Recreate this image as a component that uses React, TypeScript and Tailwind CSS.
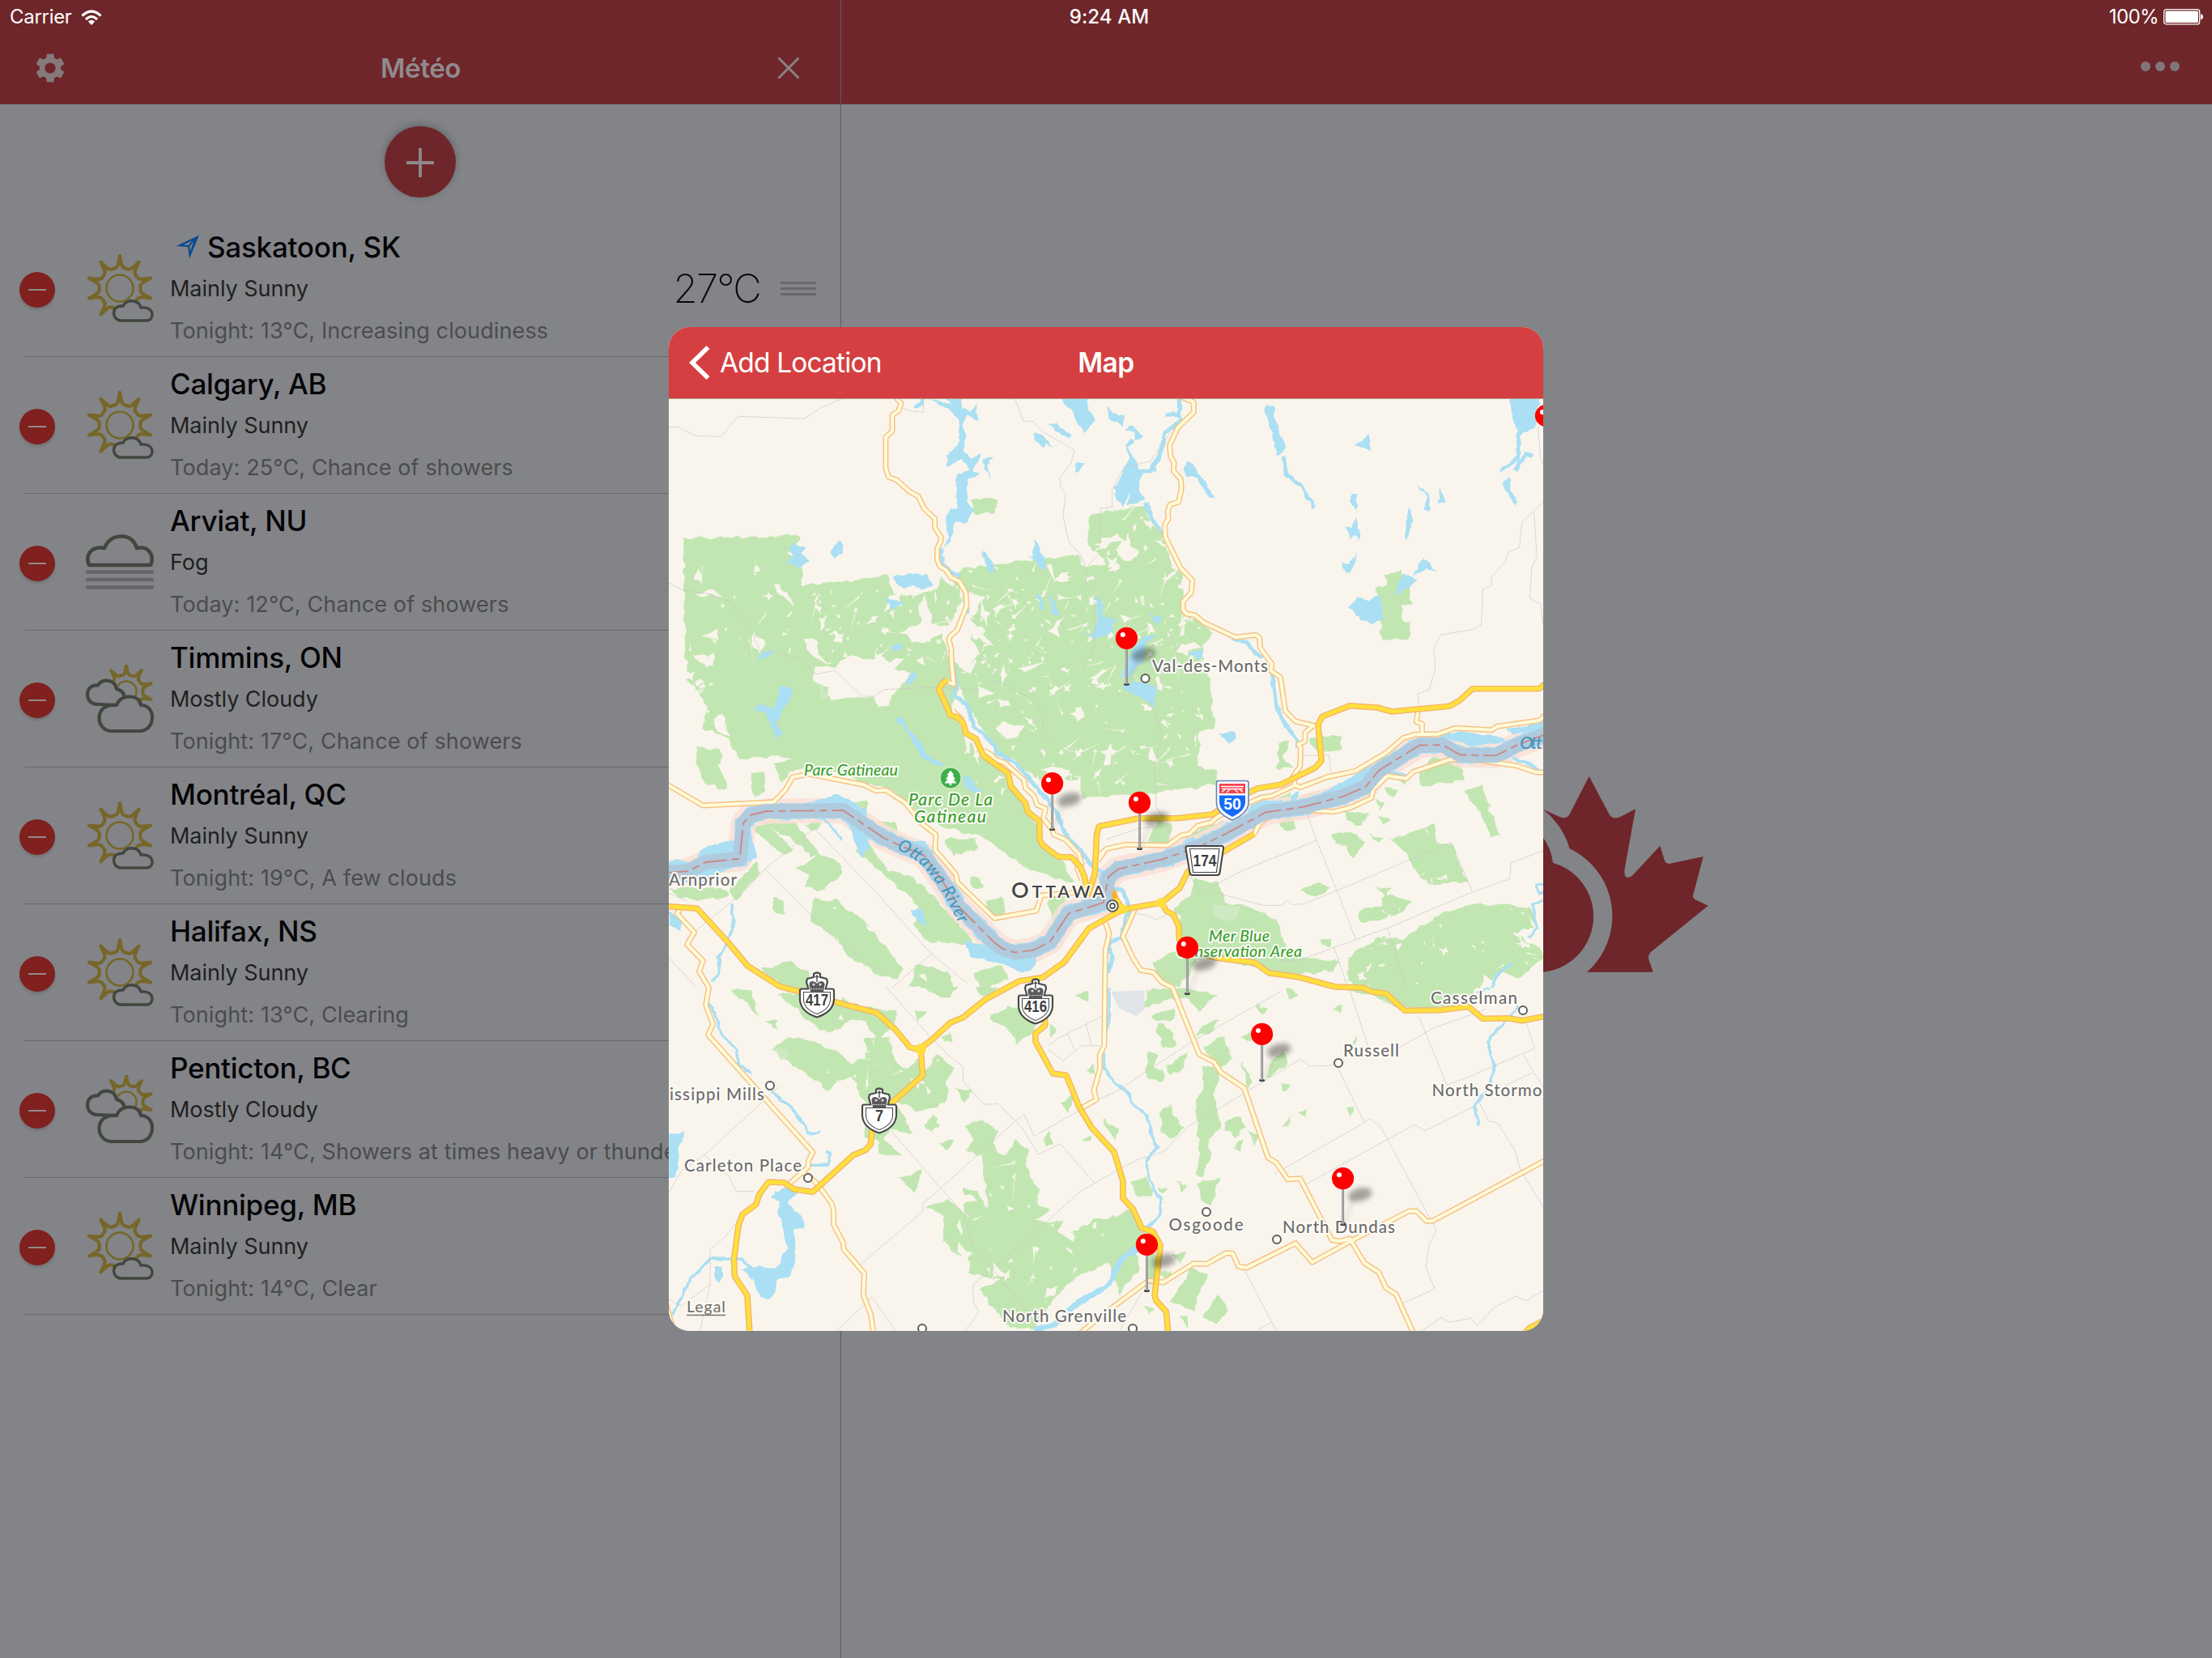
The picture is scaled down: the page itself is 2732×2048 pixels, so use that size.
import React from "react";
import { MdSettings } from "react-icons/md";

/* ------------------------------------------------------------------ */
/* Weather icons                                                        */
/* ------------------------------------------------------------------ */

const SUN = "#766629";
const CLOUD = "#42463f";
const SHADE = "#838487";

function sunPath(cx: number, cy: number, r: number, dip: number) {
  const at = (deg: number, rad: number) => {
    const a = (deg * Math.PI) / 180;
    return `${(cx + rad * Math.sin(a)).toFixed(2)} ${(cy - rad * Math.cos(a)).toFixed(2)}`;
  };
  let d = `M${at(0, r)}`;
  for (let i = 0; i < 10; i++) {
    d += `C${at(i * 36 + 6, r * 0.62)} ${at(i * 36 + 8, dip)} ${at(i * 36 + 18, dip)}`;
    d += `C${at(i * 36 + 28, dip)} ${at(i * 36 + 30, r * 0.62)} ${at(i * 36 + 36, r)}`;
  }
  return d + "Z";
}

function MainlySunny() {
  return (
    <svg viewBox="0 0 84 84" className="h-[84px] w-[84px]" fill="none" strokeLinejoin="round">
      <path d={sunPath(42, 42, 40, 25.5)} stroke={SUN} strokeWidth="4.2" />
      <circle cx="42" cy="42" r="16.5" stroke={SUN} strokeWidth="2.6" />
      <path
        d="M42.500 82 C36 81 34.500 75 34.500 72.500 C34.500 67 39 63.500 46 64 C48 59 54 57 59 58 C65 59 67 62 68 66 C77 65 82 69 82 75 C82 79 79 82 75 82 Z"
        fill={SHADE}
        stroke={CLOUD}
        strokeWidth="3.4"
      />
    </svg>
  );
}

function Fog() {
  return (
    <svg viewBox="0 0 84 84" className="h-[84px] w-[84px]" fill="none">
      <path
        d="M4 46 C-1 34 6 22 23 25 C27 15 34 10.500 44 10.500 C54 10.500 60 16 63 25 C78 22 85 34 80 46 Z"
        stroke={CLOUD}
        strokeWidth="4.600"
        strokeLinejoin="round"
      />
      {[54.5, 64, 73.5].map((y) => (
        <path key={y} d={`M2 ${y}H82`} stroke="#646567" strokeWidth="4.4" strokeLinecap="round" />
      ))}
    </svg>
  );
}

function MostlyCloudy() {
  return (
    <svg viewBox="0 0 84 84" className="h-[84px] w-[84px]" fill="none" strokeLinejoin="round">
      <path d={sunPath(50, 33, 32, 20.5)} stroke={SUN} strokeWidth="4" />
      <circle cx="50" cy="33" r="12.500" stroke={SUN} strokeWidth="2.6" />
      <path
        d="M15 49 C6 49 2 43 2 37 C2 29 8 24.500 15 25.500 C18 20 24 19 29 20 C35 21.500 37 25 38 30 C46 32 48 37 48 43 L40 50 Z"
        fill={SHADE}
        stroke={CLOUD}
        strokeWidth="4.200"
      />
      <path
        d="M31 82 C20 81 16.500 72 16.500 66 C16.500 56 24 48.500 38 50 C41 42 47 39.500 54 39.500 C62 39.500 67 44 68 50 C77 50 82 57 82 65 C82 75 76 81 68 82 Z"
        fill={SHADE}
        stroke={CLOUD}
        strokeWidth="4.200"
      />
    </svg>
  );
}

const ICONS = { sunny: MainlySunny, fog: Fog, cloudy: MostlyCloudy };

/* ------------------------------------------------------------------ */
/* Sidebar                                                              */
/* ------------------------------------------------------------------ */

type Place = {
  name: string;
  icon: keyof typeof ICONS;
  now: string;
  next: string;
  temp?: string;
  here?: boolean;
};

const PLACES: Place[] = [
  { name: "Saskatoon, SK", icon: "sunny", now: "Mainly Sunny", next: "Tonight: 13°C, Increasing cloudiness", temp: "27°C", here: true },
  { name: "Calgary, AB", icon: "sunny", now: "Mainly Sunny", next: "Today: 25°C, Chance of showers" },
  { name: "Arviat, NU", icon: "fog", now: "Fog", next: "Today: 12°C, Chance of showers" },
  { name: "Timmins, ON", icon: "cloudy", now: "Mostly Cloudy", next: "Tonight: 17°C, Chance of showers" },
  { name: "Montréal, QC", icon: "sunny", now: "Mainly Sunny", next: "Tonight: 19°C, A few clouds" },
  { name: "Halifax, NS", icon: "sunny", now: "Mainly Sunny", next: "Tonight: 13°C, Clearing" },
  { name: "Penticton, BC", icon: "cloudy", now: "Mostly Cloudy", next: "Tonight: 14°C, Showers at times heavy or thunde" },
  { name: "Winnipeg, MB", icon: "sunny", now: "Mainly Sunny", next: "Tonight: 14°C, Clear" },
];

function PlaceRow({ place }: { place: Place }) {
  const Icon = ICONS[place.icon];
  return (
    <li>
      <div className="flex h-[168px] pl-6">
        <div className="mt-16 flex h-11 w-11 shrink-0 items-center justify-center rounded-full bg-[#80201f] shadow-[0_3px_3px_rgba(0,0,0,0.12)]">
          <div className="h-[2px] w-[22px] bg-[#928a8c]" />
        </div>
        <div className="mt-[42px] ml-[38px] shrink-0">
          <Icon />
        </div>
        <div className="ml-5 flex min-w-0 flex-1 flex-col pt-[7px] whitespace-nowrap">
          <div className="flex h-[52px] items-center text-[35px] leading-[52px] font-medium tracking-[-0.250px] text-[#050507]">
            {place.here && (
              <svg viewBox="0 0 30 30" className="mr-[9px] ml-[7px] h-[30px] w-[30px]">
                <path d="M29 0.500 L17 29.500 L15 15 L0.500 14 Z M23 6 L9.500 12.500 L17 13 L18 20 Z" fill="#0b4b90" fillRule="evenodd" />
                <path d="M24 5 L15 15" stroke="#0b4b90" strokeWidth="2" />
              </svg>
            )}
            {place.name}
          </div>
          <div className="text-[27px] leading-[52px] tracking-[-0.040px] text-[#1f2022]">{place.now}</div>
          <div className="text-[27px] leading-[52px] tracking-[0.120px] text-[#4b4c4f]">{place.next}</div>
        </div>
        {place.temp && (
          <div className="flex shrink-0 items-start pr-[30px]">
            <span className="mt-[53px] text-[49px] leading-[64px] font-extralight tracking-[-1.800px] text-[#0a0a0c]">{place.temp}</span>
            <div className="mt-[76px] ml-[25px] flex w-11 flex-col gap-1">
              <div className="h-[3px] bg-[#67686b]" />
              <div className="h-[3px] bg-[#67686b]" />
              <div className="h-[3px] bg-[#67686b]" />
            </div>
          </div>
        )}
      </div>
      <div className="ml-[30px] h-px bg-[#67696c]" />
    </li>
  );
}

/* ------------------------------------------------------------------ */
/* Map                                                                  */
/* ------------------------------------------------------------------ */

/* The survey data is stored per sheet; a letter switches the sheet and
   each sheet has its own origin and a 2.8 x 3 resolution. */
const SHEETS: Record<string, [number, number]> = {
  A: [820, 400],
  B: [1360, 400],
  C: [820, 800],
  D: [1360, 800],
  E: [820, 1220],
  F: [1360, 1220],
};

function pts(data: string): [number, number][] {
  const out: [number, number][] = [];
  let o = SHEETS.A;
  let x: number | null = null;
  for (const t of data.trim().split(/\s+/)) {
    if (SHEETS[t]) o = SHEETS[t];
    else if (x === null) x = Number(t);
    else {
      out.push([o[0] + x / 2.8, o[1] + Number(t) / 3]);
      x = null;
    }
  }
  return out;
}

const line = (data: string) =>
  "M" + pts(data).map((p) => `${p[0].toFixed(1)} ${p[1].toFixed(1)}`).join("L");
const area = (list: string[]) => list.map((d) => line(d) + "Z").join("");
const lines = (list: string[]) => list.map(line).join("");

const FOREST = [
  "A 67 795 455 783 475 795 428 850 478 900 478 972 775 933 800 1000 870 1010 940 985 960 940 1000 965 1035 905 1430 857 1460 905 1535 885 1470 820 1465 770 1475 705 1550 690 B 30 690 155 677 180 740 215 780 240 870 250 900 280 940 285 1000 285 1070 350 1110 388 1147 350 1190 355 1245 D 372 90 393 300 340 310 330 440 400 450 405 505 200 535 0 550 C 1450 558 1440 480 1390 490 1400 450 1340 440 1300 500 1230 430 1140 370 1050 220 1020 140 990 240 1100 400 1190 470 1250 590 1290 650 1300 730 1380 790 1420 870 1330 850 1240 810 1180 760 1100 700 1020 680 940 650 860 590 770 520 700 500 500 430 380 400 250 410 230 340 130 300 150 220 110 150 75 110",
  "A 1055 655 1085 645 1145 648 1145 700 1075 705",
  "B 985 925 1040 912 1050 950 1068 980 1072 1042 1035 1047 1048 1105 1067 1105 1067 1163 970 1175 963 1090 948 980 993 972",
  "C 112 370 190 375 200 400 190 440 220 490 215 525 150 505 115 440",
  "C 380 430 480 405 490 440 440 460 400 500",
  "C 302 465 350 460 350 530 320 560 302 540",
  "C 330 640 450 640 480 690 545 770 510 775 440 710 400 690",
  "C 290 650 360 660 450 750 420 768 350 720",
  "C 480 660 550 640 530 680",
  "C 730 645 800 650 810 695 760 690",
  "C 640 570 700 570 700 620 650 610",
  "C 970 710 1080 705 1090 745 1000 770",
  "C 320 790 330 840 250 940 228 900",
  "C 450 820 540 770 610 800 620 840 550 900 490 890 500 840",
  "C 375 920 410 940 420 985 380 980",
  "C 515 930 590 935 690 1010 750 1090 830 1190 800 1230 720 1200 640 1150 600 1080 510 1010",
  "C 660 750 700 720 780 830 860 850 940 930 1000 1000 1080 1100 980 1095 900 1080 860 1020 880 960 790 870 720 800",
  "C 335 1190 430 1165 500 1200 540 1270 420 1270",
  "C 870 1170 980 1200 1000 1275 850 1260",
  "C 1070 1200 1170 1180 1190 1230 1100 1270",
  "C 1110 935 1170 925 1175 990 1120 990",
  "C 1060 850 1095 850 1100 890 1070 890",
  "C 1330 920 1385 900 1385 980 1345 1020",
  "C 17 890 200 890 230 910 180 935 60 930",
  "D 30 860 90 790 130 770 60 870",
  "D 162 725 190 640 240 650 240 725",
  "D 260 735 300 700 420 640 425 690 350 730",
  "D 545 620 650 530 655 575 600 600",
  "D 255 960 310 920 320 860 400 870 430 945 520 960 600 1010 640 1100 620 1140 820 1160 800 1200 600 1215 540 1180 400 1160 330 1150 310 1200 270 1260 200 1240 180 1170 270 1110 270 1000",
  "D 1000 710 1150 655 1160 720 1210 730 1240 800 1270 870 1150 880 1100 850 1060 770",
  "D 1255 535 1315 510 1380 700 1350 705 1310 610",
  "D 1095 460 1150 400 1240 430 1255 490 1110 515",
  "D 890 970 970 960 980 910 1075 940 1040 980 980 1010 900 1015",
  "D 690 900 750 872 790 890 740 920",
  "D 950 885 1000 890 990 915",
  "D 800 690 860 680 915 720 870 780 850 740 815 720",
  "D 925 695 980 710 960 725",
  "D 860 1140 960 1070 1040 1080 1180 980 1320 945 1480 960 1505 1040 1420 1060 1520 1110 1530 1150 1450 1220 1380 1200 1320 1270 1000 1275 850 1240",
  "F 850 0 1010 0 1180 0 1300 0 1260 60 1150 80 1040 75",
  "D 615 350 650 345 630 410 660 440 605 448",
  "D 720 335 830 325 830 380 750 390",
  "D 980 515 1030 525 1015 555 985 545",
  "D 950 560 985 570 960 600",
  "D 705 540 760 530 740 560 700 580",
  "D 615 655 650 600 675 670 630 675",
  "D 840 610 925 620 900 655 850 640",
  "D 960 620 1000 640 975 655",
  "D 755 1085 800 1080 790 1110 760 1110",
  "D 1025 490 1060 490 1050 510",
  "F 140 80 160 10 300 0 400 30 340 90 310 50 240 40",
  "F 170 100 255 80 250 115 200 130",
  "F 190 150 220 130 260 210 220 230",
  "F 325 180 345 140 410 118 380 170",
  "F 350 220 420 180 450 260 420 300 390 270",
  "F 350 290 390 290 410 320 390 400 415 520 370 560 378 620 350 700 325 690 340 640 335 520 330 430 355 370",
  "F 335 720 410 710 375 812 345 790",
  "F 205 460 240 425 245 470 290 520 240 565 205 540",
  "F 425 500 480 475 500 520 460 555 430 530",
  "F 510 530 545 550 530 590",
  "F 455 590 490 560 485 610",
  "F 485 270 528 350 505 375",
  "F 155 240 200 250 180 290 215 300 210 350 160 330",
  "F 225 290 300 240 290 290 240 320",
  "F 535 60 580 80 560 100",
  "F 640 0 685 30 650 45",
  "F 490 180 520 160 515 200",
  "F 590 270 630 230 640 290 570 340",
  "F 615 360 660 360 640 385",
  "F 680 460 710 450 710 480",
  "F 630 520 655 475 650 515",
  "F 845 440 880 440 860 485",
  "F 798 80 835 60 830 100",
  "F 870 200 885 185 875 215",
  "F 5 490 60 520 50 565",
  "F 105 720 160 700 180 780 120 770",
  "F 195 740 235 740 215 765",
  "F 262 715 300 735 280 755",
  "F 0 860 110 825 150 900 120 960 130 1040 60 1140 50 1080 20 1020 -60 1000 -100 900",
  "F 160 990 190 990 190 1070 160 1080",
  "F 240 990 290 980 280 1020",
  "F 200 1060 245 1050 230 1090",
  "F 305 1035 370 1070 340 1130 320 1200 240 1160 280 1100",
  "F 350 1220 405 1140 440 1190 400 1245",
  "F 270 1215 300 1220 300 1260",
  "F 145 1175 180 1190 160 1212",
  "E 235 5 300 10 335 110",
  "E 345 120 395 120 390 155",
  "E 390 20 480 20 600 60 620 40 720 80 800 80 805 120 770 170 740 200 700 130 640 120 600 160 540 160 490 110",
  "E 375 225 430 180 520 200 600 240 650 280 700 260 690 180 780 190 800 280 840 300 890 260 895 325 945 245 1000 300 975 350 985 400 950 440 870 460 840 430 800 420 840 500 860 540 780 530 760 560 825 620 750 620 740 570 690 550 700 430 650 330 600 350 570 380 500 330",
  "E 960 180 995 160 995 210",
  "E 1125 110 1190 70 1280 90 1285 160 1225 210 1180 140",
  "E 1080 0 1160 0 1110 40",
  "E 870 80 905 90 880 130",
  "E 900 510 930 475 955 510 920 535",
  "E 945 575 1000 565 985 600",
  "E 1005 370 1065 380 1040 430",
  "E 1040 510 1100 490 1155 540 1140 590 1180 620 1215 565 1260 600 1250 660 1300 760 1290 810 1330 830 1290 860 1380 870 1360 900 1410 940 1480 860 1568 850 1568 1010 1450 1060 1400 1090 1330 1190 1280 1260 1200 1265 1090 1120 1170 1080 1050 1060 1060 1020 960 940 970 840 900 820 980 780 1040 840 1030 750 1080 750 1120 820 1100 620 1040 610 1070 560",
  "E 810 700 890 680 870 765 830 720",
  "E 1365 430 1420 400 1400 465",
  "E 1315 585 1330 530 1350 580",
  "E 1440 565 1480 540 1480 560",
  "E 1455 310 1490 280 1490 325",
  "E 1330 140 1360 150 1340 185",
  "E 1420 30 1470 10 1465 50",
  "E 890 0 1010 0 990 40 950 30",
];

const CLEARINGS = [
  "A 880 1040 905 1010 930 1110 985 1120 1040 1000 1110 1010 1060 1100 1120 1130 1080 1170 1060 1150 1090 1220 1060 1260 C 1080 40 1060 100 1010 60 985 30 960 -60 A 920 1180 860 1180 820 1140 885 1110",
  "C 515 75 590 70 650 20 720 50 740 15 780 50 830 40 800 80 850 90 830 130 790 170 780 215 740 220 730 180 650 185 570 195 570 140 520 130",
  "A 490 1160 530 1180 540 1230 580 1260 C 520 40 500 10",
  "A 100 950 125 905 130 955",
  "A 110 1000 160 990 205 1012 150 1010",
  "A 300 1190 310 1140 350 1185 335 1215",
  "A 380 970 400 960 450 1040 420 1020",
  "A 125 1225 150 1240 170 1260 C 170 25 140 40",
  "C 100 30 140 30 175 65 150 70",
  "C 150 330 200 330 210 360 150 370",
  "C 170 260 200 250 230 330 180 310",
  "C 1150 300 1180 270 1240 290 1230 330 1190 340 1160 330",
  "B 50 840 95 770 100 820 130 850 110 880 60 860",
  "B 0 790 40 790 20 830 0 820",
];

const LAKES = [
  "A 1370 276 1465 276 1465 320 1493 355 1455 402 1430 370 1410 320",
  "A 910 276 960 290 1000 300 975 276 1028 276 1030 310 1060 325 1080 292 1078 325 1092 362 1045 340 1035 370 1045 420 1035 470 1060 500 1100 482 1070 540 1092 555 1055 575 1052 620 1045 660 1070 690 1045 740 1010 735 990 800 965 832 985 790 975 740 978 710 990 685 1020 680 1010 640 1010 560 1055 545 1030 500 977 530 980 490 1005 460 1020 430 1020 360 990 320",
  "A 862 300 890 290 890 276 905 276 898 305 865 312",
  "A 1105 500 1135 492 1115 530 1132 573 1105 540",
  "A 1325 370 1355 372 1410 415 1400 430",
  "A 1275 402 1300 405 1348 455 1320 440 1315 460 1280 430",
  "A 1418 550 1430 515 1460 520 1430 545",
  "A 1532 305 1568 340 1560 365 1540 350",
  "A 575 845 605 802 618 820 618 850 590 868",
  "A 417 895 445 860 430 830 450 815 490 830 475 850 510 880 465 908 440 885",
  "A 793 935 870 922 890 935 910 925 935 970 890 985 860 970 830 985 800 960",
  "A 1095 855 1110 847 1140 890 1142 922 1125 925",
  "A 1258 860 1275 865 1283 790 1300 840 1320 870 1315 915 1285 885",
  "A 765 1010 785 1020 840 1035 785 1060",
  "A 1285 1000 1300 1000 1320 1060 1300 1050",
  "A 1335 995 1370 1075 1340 1080",
  "A 1450 1135 1485 1150 1500 1100 1495 1005 1520 1040 1515 1090 1568 1090 1530 1150 1490 1168",
  "A 780 1195 820 1180 825 1205 800 1215",
  "A 325 1250 340 1215 385 1210 360 1230",
  "A 1555 610 1568 590 1568 645",
  "B 570 300 598 303 600 350 640 455 610 490 590 400 570 330",
  "B 285 530 300 508 330 540 395 645 375 645 330 570 290 565",
  "B 865 630 885 630 885 690 860 660",
  "B 845 750 870 755 880 710 895 775 890 803 875 780 860 800",
  "B 833 880 860 890 885 850 875 900 858 928 835 910",
  "B 875 445 900 435 925 410 937 472 900 455",
  "B 1090 598 1130 630 1140 690 1120 690 1125 640",
  "B 1175 610 1187 660 1163 665",
  "B 1068 675 1078 730 1062 800 1050 795 1055 750",
  "B 1080 935 1115 868 1160 920 1120 905",
  "B 1045 925 1097 945 1060 980 1020 1005 1030 955",
  "B 850 1050 885 1012 920 1025 965 1005 980 1095 935 1110 900 1095",
  "B 1412 276 1518 276 1500 385 1450 415 1425 370",
  "B 1385 590 1415 567 1415 610 1440 660 1430 672",
  "B 15 305 60 345 80 340 75 382 35 350",
  "B 80 400 110 375 145 415 120 430 115 400",
  "B 85 450 110 490 135 540 185 530 190 550 145 550 130 610 150 655 90 675 100 620 75 680 45 630 70 560 95 500",
  "B 165 1065 185 1085 215 1090 190 1120",
  "B 0 1075 15 1120 50 1120 30 1150 0 1160",
  "B 120 1185 150 1160 200 1150 160 1180 140 1260 105 1260",
  "B 300 1225 350 1205 345 1240",
  "D 75 145 120 120 190 150 180 225 155 190 80 160",
  "D 110 0 150 0 130 60 90 120 70 100",
  "D 410 325 460 310 468 335 445 355",
  "D 655 545 685 530 680 555 650 590",
  "D 500 605 540 570 630 565 560 615",
  "D 275 720 320 700 315 725",
  "D 745 550 830 500 960 420 1010 400 900 520",
  "D 1165 325 1240 310 1380 330 1410 350 1280 365",
  "D 1400 300 1535 278 1535 305 1420 325",
  "C 310 230 330 205 385 230 390 180 410 140 445 150 440 190 410 230 390 280 410 320 390 335 370 290 350 240",
  "C 805 270 820 250 835 290 890 350 910 400 970 435 950 440 890 410 860 340",
  "C 1030 475 1060 480 1080 520 1110 530 1070 540 1040 500",
  "C 830 130 870 85 875 110 850 135",
  "C 850 970 890 970 910 1030 890 1030",
  "C 17 970 60 1010 60 1050 17 1030",
  "C 515 570 600 542 700 600 710 740 680 780 650 690 620 630",
  "C 17 790 50 780 90 800 140 740 220 715 300 690 325 780 200 830 130 880 17 860",
  "C 1035 1090 1170 1110 1290 1120 1285 1180 1240 1205 1160 1170 1060 1150",
  "C 860 720 900 715 950 800 1000 900 940 860",
  "E 370 775 400 745 440 745 465 760 430 790 435 810 480 850 485 890 450 895 455 960 450 1020 435 1070 390 1080 385 1130 365 1155 335 1150 310 1090 270 1040 320 1035 385 1040 430 960 415 925 415 890 395 840 400 795",
  "E 17 545 70 535 65 570 45 600 55 640 40 700 17 705",
  "E 175 1035 200 1030 205 1070 190 1095 175 1075",
];

const STREAMS = [
  "A 960 835 965 890 1020 940",
  "A 1045 1050 1050 1075",
  "C 1000 60 1015 140 1000 180 1050 210 1070 290 1145 360 1150 390 1220 430 1290 520 1360 610 1385 690 1440 750 1480 810 1520 830",
  "B 630 490 640 560 690 600 740 680",
  "B 1445 400 1440 500 1380 545",
  "B 1430 545 1470 480 1495 490",
  "B 270 276 270 340 220 335",
  "B 280 350 220 405 205 490 170 540",
  "B 110 430 90 460",
  "B 155 660 180 730 215 775",
  "B 450 1165 500 1180 540 1225 560 1240",
  "D 590 90 605 220 640 290 675 340 680 370",
  "D 40 890 80 905 95 960 85 1000 70 1080 30 1090 40 1160 20 1200",
  "D 1420 410 1480 430 1515 455",
  "D 990 460 1060 475",
];

const BROOKS = [
  "C 235 945 240 1040 190 1150 195 1190 165 1240",
  "C 530 620 570 650 615 710",
  "E 160 60 200 170 250 230 260 290 300 315",
  "E 370 385 450 450 500 540 540 535",
  "E 500 655 570 655 575 615 560 605",
  "E 30 1210 60 1150 90 1080 160 1005 270 1005 300 1040",
  "E 1540 0 1540 100 1520 200 1520 290 F 45 350 80 375 120 445 160 475 175 550 195 590 155 640 165 710 205 780 205 840 165 885",
  "D 1535 875 1508 880 1510 905 1535 905",
  "D 1530 940 1495 950 1495 1010 1510 1040 1480 1075",
  "D 1420 1170 1370 1210 1350 1260",
  "F 1345 0 1300 20",
  "F 1440 70 1400 130 1370 155 1335 200 1360 290 1340 370 1290 440 1305 515",
];

const RIDEAU = "E 1280 1270 1350 1250 1430 1170 1540 1100 F 60 1020 130 960";

const BOUNDS = [
  "A 17 383 45 382 110 415 198 418 255 343 400 348 485 352 545 310 615 278",
  "A 820 310 850 322 897 327 897 280",
  "A 1215 280 1243 360 1278 362 1310 400 1420 468 1408 515 1370 570 1372 605 1390 632 1380 710 1400 808 1440 855 1460 905 1505 850 1510 685 1550 678 B 38 680 38 615 80 530 170 510 240 400",
  "A 17 960 70 990 160 1000 230 1030 290 1110 335 1215 C 400 20 490 50 515 100 590 85 685 180 730 180 760 155 900 148 1000 150 1090 155 1120 125 1170 130 1210 160 1280 190 1310 250 1312 300 1335 350",
  "A 1460 905 1460 960 1490 1000 1490 1200 C 1450 80",
  "B 1535 655 1455 735 1447 827 1405 850 1400 880 1350 937 1350 970 1320 985 1315 1112 1290 1132 1175 1152 1150 1207 1155 1260 D 1155 80 1135 155 1095 170 1100 215",
  "B 1497 695 1507 865 1490 900 1482 1015 1520 1040 1528 1115",
  "B 1510 380 1520 500 1530 520",
  "D 170 200 210 320 185 440 190 590 230 650 240 710",
  "D 700 400 788 398 795 465",
  "D 310 850 340 910 490 825 745 715",
  "D 710 610 745 715 815 900 880 1080",
  "D 385 905 560 955 620 955 645 938 660 952 700 950 815 900 1210 722 1285 905",
  "D 620 1160 680 1160 1000 1035 1285 905 1412 857 1418 797 1535 750",
  "D 805 1110 850 1250",
  "D 990 1040 1055 1260",
  "D 20 710 130 670 230 660",
  "D 110 985 150 990 190 1008 225 990",
  "C 17 910 80 940",
  "C 75 1080 270 910 350 820 520 670",
  "C 350 820 600 1090 780 1220",
  "C 520 670 720 890 920 1130 1050 1245",
  "C 790 1260 930 1130",
  "C 17 1150 110 1255",
  "E 17 760 60 680 140 620 400 365",
  "E 140 620 225 700 250 755 310 755",
  "E 245 878 210 925 160 970 160 1100 125 1270",
  "E 17 1155 60 1180 160 1100",
  "E 770 0 920 180 975 240 1035 295 1035 345 1105 433 1155 430 1240 520 1295 618 1370 578 1490 725 F 0 710 120 640 220 605 300 515 450 420 690 265 720 290 780 290 820 280",
  "E 1490 725 1440 755 1250 940 1070 1100 1070 1165 1090 1200 1040 1275",
  "E 785 530 955 740 1035 835 1070 960 1150 1060 1250 1190",
  "E 680 1025 895 830 895 800 960 740 1215 495 1245 468 1280 550 1430 460 F 0 410 60 380 170 300 330 190 620 15",
  "E 600 1270 720 1147 800 1270",
  "E 1330 215 1360 190 1515 105",
  "E 1330 230 1380 270 1445 215 1510 215",
  "E 1395 170 1420 230",
  "E 1460 135 1480 215",
  "F 860 10 930 240",
  "F 1000 240 1150 150 1330 80",
  "F 1100 110 1195 360 1250 340 1500 225 1470 130",
  "F 1460 250 1530 370",
  "F 1310 410 1490 315",
  "F 820 300 910 500 930 487 965 512 990 562 1160 900 1135 950 1123 1035 1153 1115 1045 1170",
  "F 600 690 910 500",
  "F 710 728 990 562 1085 508 1120 530 1290 440",
  "F 1310 430 1340 495 1370 500 1430 600 1450 675 1530 815",
  "F 495 1045 605 1270",
  "F 540 1270 590 1240",
  "F 140 1130 65 1270",
  "F 1110 1270 1178 1222 1205 1240 1280 1225 1300 1252 1360 1185 1435 1143 1468 1160 1530 1122",
];

const MINOR_ROADS = [
  "A 800 270 820 295 812 322 790 338 790 398 767 420 767 535 777 567 806 580 850 622 880 640 900 685 937 722 937 755 958 790 958 805 945 832 945 875 955 900 975 912 993 940 1022 955 1044 997 1047 1045 1015 1133 990 1158 985 1170 993 1200 995 1260 C 1002 135 980 128",
  "C 1105 380 1130 395 1145 412 1180 428 1245 490 1250 520 1280 550 1290 582 1320 597 1312 632 1343 675 1348 692 1390 712 1435 765 1445 800 1430 820 1445 860",
  "C 1000 235 1035 270",
  "C 0 500 135 585 380 572 420 527 445 480 500 468 690 508 732 530 768 528 835 575 890 650 940 692 938 750 1010 840 1015 870 1143 1003 1288 975 1305 918 1460 905",
  "C 1500 775 D 20 745 85 730 230 733 275 697 305 690 335 660 380 648 405 625 555 555 590 550 670 510 690 517 780 480 880 457 985 390 1045 335 1085 322 1165 320 1225 298 1350 305 1370 292 1515 270 1535 250",
  "C 1500 790 D 10 757",
  "B 280 272 320 290 320 328 265 385 237 450 240 490 252 515 250 545 275 575 278 610 268 660 238 670 230 697 233 722 220 745 222 790 275 905 315 950 312 995 283 1030 283 1060 295 1075 325 1080 355 1107 465 1162 535 1153 548 1165 550 1200 590 1260 D 587 85 620 110 637 235 672 273 740 290",
  "D 730 292 705 315 705 348 682 358 690 370 688 440 665 475 670 510",
  "D 1095 237 1090 275 1110 282 1110 318",
  "D 530 690 545 655 585 620 700 600 805 608 865 592 935 557 940 525 990 475 1055 485 1080 460 1205 415 1275 412 1435 437 1505 462 1540 462",
  "C 60 965 45 985 105 1055 80 1100 135 1160 122 1200 155 1260 E 145 65 170 135 153 175 515 610 500 640 498 665 435 725",
  "E 480 685 510 705 540 740 580 800 587 825 587 878 620 945 622 970 693 1058 690 1140 715 1210 725 1280",
  "C 1527 1020 1540 1060 1527 1120 1525 1260 E 1523 215 1507 250 1508 300 1487 380 1495 415 1435 452",
  "D 120 960 75 1070 110 1150 137 1195 180 1203 210 1240 247 1260 F 340 248 390 275 415 315 495 372 577 630 605 648 645 710 688 707 798 935 825 940 860 930 910 1020 960 1055 985 1112 1020 1137 1080 1280",
  "F 1540 638 1145 865 1125 865 1090 828 1065 828 870 935 730 1018 672 947 503 1038 475 1033 455 985 432 983 365 1024 320 1022 215 1092 165 1085 20 1200 E 1440 1280",
  "E 5 1160 35 1280",
];

const HIGHWAYS = [
  "C 980 120 965 130 950 155 975 210 990 250 1015 258 1035 280 1045 318 1078 337 1105 400 1190 465 1200 515 1250 575 1258 608 1298 642 1300 712 1310 732 1363 775 1410 777 1440 812 1455 850 1465 920",
  "C 1465 920 1490 840 1497 690 1505 662 D 130 632 260 632 385 618 450 570 540 522 620 508 740 445 762 420 750 285 765 255 860 215 955 222 1005 237 1205 217 1240 195 1285 152 1515 152 1540 130",
  "D 530 690 425 755 340 810 300 830 272 890 210 945 75 970 0 1015 C 1470 1040 1385 1165 1310 1222 1230 1235 1190 1258 E 1110 45 1035 110 990 130 930 190 888 225 895 325 790 425 720 530 715 580 697 602 655 620 515 757 450 747 415 722 362 720 330 765 318 803 272 840 258 880 242 1010 245 1070 288 1140 297 1285",
  "C 0 957 115 967 220 1090 290 1180 400 1255 E 470 15 590 52 735 93 800 155 850 220 888 232",
  "D 210 945 225 975 250 990 268 1030 270 1080 300 1120 400 1150 530 1167 580 1205 680 1220 810 1257 905 1260 F 935 15 985 22 1050 85 1175 83 1270 70 1320 115 1410 113 1455 122 1540 105",
  "C 1285 1225 E 1318 100 1318 140 1285 170 1285 200 1345 318 1392 325 1435 440 1480 520 F 45 610 75 715 75 780 110 820 140 890 180 905 205 955 185 1140 190 1160 225 1200 232 1285",
  "D 75 970 50 930 40 903 15 903",
  "F 1465 1280 1480 1262 1540 1228",
];

const RIVER =
  "C 0 835 85 828 145 795 262 782 275 650 300 620 355 606 620 603 760 705 820 735 900 770 960 860 1020 960 1140 1090 1170 1115 1215 1130 1280 1120 1335 1090 1400 985 1520 945 D 25 850 60 820 210 785 345 735 430 690 570 610 700 590 835 552 915 515 960 455 1100 362 1180 360 1240 397 1365 400 1440 360 1540 320";

/* Small clearings scattered through the woods, from a fixed seed. */
function scatter() {
  let s = 20177;
  const rnd = () => {
    s = (s * 1103515245 + 12345) % 2147483648;
    return s / 2147483648;
  };
  const zones: [number, number, number, number, number][] = [
    [1020, 725, 300, 100, 75],
    [850, 700, 170, 110, 24],
    [1190, 700, 170, 280, 110],
    [1360, 630, 125, 340, 130],
    [1000, 810, 110, 50, 16],
    [850, 830, 30, 120, 14],
    [1010, 1240, 150, 170, 30],
    [1170, 1430, 200, 210, 48],
    [1670, 1120, 230, 100, 34],
    [1730, 1010, 90, 80, 10],
    [1000, 1100, 220, 120, 16],
  ];
  let d = "";
  for (const [x0, y0, w, h, n] of zones) {
    for (let i = 0; i < n; i++) {
      const cx = x0 + rnd() * w;
      const cy = y0 + rnd() * h;
      const size = 2 + rnd() * rnd() * rnd() * 17;
      const turn = rnd() * 6.28;
      const flat = 0.25 + rnd() * 0.6;
      const k = 6 + Math.floor(rnd() * 4);
      for (let j = 0; j < k; j++) {
        const a = (j / k) * 6.283;
        const r = size * (j % 2 ? 0.35 + rnd() * 0.35 : 0.7 + rnd() * 0.9);
        const px = Math.cos(a) * r;
        const py = Math.sin(a) * r * flat;
        const x = cx + px * Math.cos(turn) - py * Math.sin(turn);
        const y = cy + px * Math.sin(turn) + py * Math.cos(turn);
        d += `${j ? "L" : "M"}${x.toFixed(1)} ${y.toFixed(1)}`;
      }
      d += "Z";
      if (i % 3 === 0) {
        const len = 10 + rnd() * 22;
        const ex = cx + Math.cos(turn) * len;
        const ey = cy + Math.sin(turn) * len;
        d += `M${cx.toFixed(1)} ${cy.toFixed(1)}L${ex.toFixed(1)} ${ey.toFixed(1)}L${(cx + 1.2).toFixed(1)} ${(cy + 1.4).toFixed(1)}Z`;
      }
    }
  }
  return d;
}

type Label = { t: string; x: number; y: number; w?: number; green?: boolean; size?: number };

const LABELS: Label[] = [
  { t: "Val-des-Monts", x: 1423, y: 830, w: 143 },
  { t: "Arnprior", x: 826, y: 1094, w: 84 },
  { t: "Parc Gatineau", x: 993, y: 958, w: 116, green: true, size: 19.5 },
  { t: "Parc De La", x: 1122, y: 995, w: 104, green: true, size: 21 },
  { t: "Gatineau", x: 1129, y: 1016, w: 89, green: true, size: 21 },
  { t: "Mer Blue", x: 1493, y: 1162.5, w: 75, green: true, size: 19.5 },
  { t: "Conservation Area", x: 1453, y: 1181.5, w: 155, green: true, size: 19.5 },
  { t: "issippi Mills", x: 827, y: 1358.5, w: 117 },
  { t: "Carleton Place", x: 845, y: 1447, w: 145 },
  { t: "North Grenville", x: 1238, y: 1632.5, w: 153 },
  { t: "Casselman", x: 1767, y: 1240, w: 107 },
  { t: "Russell", x: 1659, y: 1305, w: 69 },
  { t: "North Stormo", x: 1768.5, y: 1354, w: 136 },
  { t: "Osgoode", x: 1443.500, y: 1520, w: 92 },
  { t: "North Dundas", x: 1584, y: 1522.500, w: 139 },
];

const TOWNS = [
  [1414.6, 838], [951, 1341], [998, 1455], [1139, 1641], [1399, 1641],
  [1490, 1497], [1577, 1531], [1653, 1313], [1881, 1248],
];

const PINS = [
  [1909.500, 513.5], [1391.4, 788.3], [1299.6, 967.6], [1407.500, 991.4],
  [1466.400, 1170.4], [1558.600, 1277.4], [1658.600, 1455.600], [1416.400, 1537.4],
];

function CrownShield({ x, y, n }: { x: number; y: number; n: string }) {
  return (
    <g transform={`translate(${x} ${y})`}>
      <path
        d="M-4 -34 Q0 -37 4 -34 L4 -30 L12 -28 L13 -24 L10.500 -15.500 L19 -15.500 Q21 -15.500 21 -13 L21 -2 Q20 13 0 19.500 Q-20 13 -21 -2 L-21 -13 Q-21 -15.500 -19 -15.500 L-10.500 -15.500 L-13 -24 L-12 -28 L-4 -30 Z"
        fill="#fff"
        stroke="#4a4a4a"
        strokeWidth="2.200"
        strokeLinejoin="round"
      />
      <path d="M-16.500 -11.500 H16.500 V-1 Q15 10 0 15.500 Q-15 10 -16.500 -1 Z" fill="none" stroke="#4a4a4a" strokeWidth="1.100" />
      <path d="M-8 -12 L-9 -18 Q-11 -24 -6 -25 Q-2 -25 0 -22 Q2 -25 6 -25 Q11 -24 9 -18 L8 -12 Z" fill="#5a5a5a" />
      <path d="M0 -33 V-24 M-2.500 -30.500 H2.500" stroke="#4a4a4a" strokeWidth="1.400" />
      <path d="M-8 -15.500 H8" stroke="#d8d8d8" strokeWidth="1.200" strokeDasharray="2 1.200" />
      <circle cx="-4" cy="-21" r="1.600" fill="#ddd" />
      <circle cx="4" cy="-21" r="1.600" fill="#ddd" />
      <text y="5" textAnchor="middle" fontSize="20.500" fontWeight="700" fill="#3d3d3d" fontFamily="'Liberation Sans', sans-serif" textLength={n.length > 1 ? 28 : 10} lengthAdjust="spacingAndGlyphs">
        {n}
      </text>
    </g>
  );
}

function Pin({ x, y }: { x: number; y: number }) {
  return (
    <g transform={`translate(${x} ${y})`}>
      <ellipse cx="21" cy="20" rx="15" ry="8" transform="rotate(-14 21 20)" fill="#000" opacity="0.34" filter="url(#soft)" />
      <path d="M1 56 L14 25" stroke="#000" strokeWidth="2.500" opacity="0.14" filter="url(#soft)" />
      <ellipse cx="0" cy="57" rx="3.500" ry="1.600" fill="#3b3b3b" />
      <path d="M0 10 V57" stroke="#8c8c90" strokeWidth="3" />
      <path d="M-0.300 10 V56" stroke="#b9b9bd" strokeWidth="1.200" />
      <circle r="13.600" fill="#fe0000" />
      <circle cx="-4.600" cy="-4.400" r="3" fill="#fff" />
    </g>
  );
}

function RegionMap() {
  return (
    <svg viewBox="826 493 1080 1151" className="block h-[1151px] w-[1080px]" fill="none">
      <defs>
        <filter id="rough" x="0" y="0" width="100%" height="100%">
          <feTurbulence type="fractalNoise" baseFrequency="0.07" numOctaves="2" seed="7" />
          <feDisplacementMap in="SourceGraphic" scale="9" xChannelSelector="R" yChannelSelector="G" />
        </filter>
        <filter id="ripple" x="-2%" y="-2%" width="104%" height="104%">
          <feTurbulence type="fractalNoise" baseFrequency="0.09" numOctaves="2" seed="3" />
          <feDisplacementMap in="SourceGraphic" scale="6" xChannelSelector="R" yChannelSelector="G" />
        </filter>
        <filter id="soft" x="-60%" y="-60%" width="220%" height="220%">
          <feGaussianBlur stdDeviation="3.200" />
        </filter>
        <path id="river-label" d="M1107 1049 C1134 1060 1149 1079 1162 1099 C1172 1114 1173 1122 1190 1150" />
      </defs>
      <rect x="826" y="492" width="1080" height="1152" fill="#f9f5ed" />

      <g filter="url(#rough)">
        <path d={area(FOREST)} fill="#c2e6b1" />
        <path d={area(CLEARINGS)} fill="#f9f5ed" />
      </g>
      <path d={scatter()} fill="#f9f5ed" />
      <path d={area(["D 385 955 480 960 470 1000 430 1015 390 990", "C 540 130 570 190 540 190", "E 380 220 420 230 440 245 405 270"])} fill="#cfe9c4" />
      <path d={area(["F 35 15 150 10 150 80 120 105 60 75"])} fill="#e0e4e9" />

      <path d={line(RIVER)} stroke="#fbdfd6" strokeOpacity="0.85" strokeWidth="31" strokeLinejoin="round" />
      <g filter="url(#ripple)">
        <path d={area(LAKES)} fill="#abdff3" />
        <path d={lines(STREAMS)} stroke="#abdff3" strokeWidth="5" />
        <path d={lines(BROOKS)} stroke="#abdff3" strokeWidth="3.400" />
        <path d={line(RIDEAU)} stroke="#abdff3" strokeWidth="7" />
        <path d={line(RIVER)} stroke="#abdff3" strokeWidth="20" />
      </g>

      <path d={lines(BOUNDS)} stroke="#cbc9c6" strokeWidth="1" strokeDasharray="2 1" />
      <g strokeLinejoin="round">
        <path d={lines(MINOR_ROADS)} stroke="#f6c186" strokeWidth="7" />
        <path d={lines(MINOR_ROADS)} stroke="#fffbd8" strokeWidth="4" />
        <path d={lines(HIGHWAYS)} stroke="#f4b26a" strokeWidth="7.600" />
        <path d={lines(HIGHWAYS)} stroke="#ffdf3e" strokeWidth="5" />
        <path d={line("D 50 930 40 903 15 903")} stroke="#ffae2b" strokeWidth="5" />
      </g>
      <g fill="#ffdf3e">
        <circle cx="1434" cy="1115" r="6" />
        <circle cx="1387" cy="1123" r="6" />
        <circle cx="1137" cy="1296" r="7" />
      </g>

      <g strokeLinejoin="round">
        <path d={line(RIVER)} stroke="#b0c8dc" strokeWidth="18" strokeOpacity="0.95" />
        <path d={line(RIVER)} stroke="#cc8781" strokeWidth="1.800" strokeDasharray="30 6 9 6" />
      </g>

      <g fontFamily="Lato, sans-serif" fontSize="20.500" fontWeight="500" stroke="#fdfbf6" strokeWidth="4" strokeLinejoin="round" paintOrder="stroke">
        {LABELS.map((l) => (
          <text
            key={l.t}
            x={l.x}
            y={l.y}
            fontSize={l.size ?? 20.5}
            fontStyle={l.green ? "italic" : "normal"}
            fill={l.green ? "#37a02c" : "#6c6c6c"}
            textLength={l.w}
            style={{ paintOrder: "stroke" }}
          >
            {l.t}
          </text>
        ))}
        <text x="1249" y="1109" fill="#454545" fontWeight="600" textLength="115" style={{ paintOrder: "stroke" }}>
          <tspan fontSize="27">O</tspan>
          <tspan fontSize="21.500">TTAWA</tspan>
        </text>
        <text fill="#4597bb" fontSize="21" stroke="none" fontStyle="italic">
          <textPath href="#river-label" textLength="124">Ottawa River</textPath>
        </text>
        <text x="1877" y="925" fill="#4597bb" fontSize="22" stroke="none" fontStyle="italic" textLength="28">Ott</text>
        <text x="848" y="1621" fontSize="19.500" fill="#77746f" textLength="48" style={{ paintOrder: "stroke" }}>Legal</text>
      </g>
      <path d="M848 1624.500H896" stroke="#77746f" strokeWidth="1.600" />

      {TOWNS.map(([x, y]) => (
        <circle key={`${x}-${y}`} cx={x} cy={y} r="5" fill="#fff" stroke="#5f5f5a" strokeWidth="2" />
      ))}
      <circle cx="1374" cy="1119" r="6.800" fill="#fff" stroke="#555" strokeWidth="1.800" />
      <circle cx="1374" cy="1119" r="3" fill="#fff" stroke="#555" strokeWidth="1.800" />

      <circle cx="1174" cy="961" r="13" fill="#3db04a" stroke="#e6f4df" strokeWidth="1" />
      <path d="M1174 951.500 L1178.500 957.500 H1176.500 L1180 962.500 H1177.500 L1181.500 967.500 H1175.200 V970 H1172.800 V967.500 H1166.500 L1170.500 962.500 H1168 L1171.500 957.500 H1169.500 Z" fill="#fff" />

      <CrownShield x={1009} y={1237} n="417" />
      <CrownShield x={1279} y={1245} n="416" />
      <CrownShield x={1086} y={1380} n="7" />

      <path d="M1505 964.500 H1539.500 Q1542 964.500 1542 967 V992 Q1541 1005 1522 1013 Q1503 1005 1502.500 992 V967 Q1502.500 964.500 1505 964.500 Z" fill="#fff" stroke="#6384b8" strokeWidth="1.600" />
      <path d="M1506 968 H1538 V980 H1506 Z" fill="#f8414d" />
      <path d="M1506 982.500 H1538 V992 Q1537 1002 1522 1009 Q1507 1002 1506 992 Z" fill="#146bfa" />
      <path d="M1508 971.500 H1536 M1509 974.500 H1535 M1513 975 L1509 978.500 M1531 975 L1535 978.500 M1519 975 L1515 979 M1525 975 L1529 979" stroke="#fff" strokeWidth="1.300" />
      <text x="1522" y="1000" textAnchor="middle" fontSize="19.500" fontWeight="700" fill="#fff" fontFamily="'Liberation Sans', sans-serif">50</text>

      <path d="M1467 1045 H1508.500 Q1511.500 1045 1511 1048 L1506.500 1078 Q1506 1081 1503 1081 H1473 Q1470 1081 1469.500 1078 L1464.500 1048 Q1464 1045 1467 1045 Z" fill="#fff" stroke="#444" strokeWidth="2" />
      <path d="M1469.500 1048.500 H1506 L1502.500 1077.500 H1473.500 Z" fill="none" stroke="#444" strokeWidth="1.200" strokeLinejoin="round" />
      <text x="1488" y="1070" textAnchor="middle" fontSize="20" fontWeight="700" fill="#3d3d3d" fontFamily="'Liberation Sans', sans-serif" textLength="29" lengthAdjust="spacingAndGlyphs">174</text>

      {PINS.map(([x, y]) => (
        <Pin key={`${x}`} x={x} y={y} />
      ))}
    </svg>
  );
}

function MapSheet() {
  return (
    <section className="flex h-[1240px] w-[1080px] flex-col overflow-hidden rounded-[26px] bg-[#f9f5ed]">
      <header className="grid h-[89px] grid-cols-3 items-center border-b border-[#b5a08f] bg-[#d53f41] text-[34px] text-white">
        <button className="flex items-center pl-6 whitespace-nowrap">
          <svg viewBox="0 0 28 44" className="h-11 w-7" fill="none" stroke="#fff" strokeWidth="5.500">
            <path d="M24.500 3 L5 22 L24.500 41" />
          </svg>
          <span className="ml-[11px] text-[33.500px] tracking-[-0.850px]">Add Location</span>
        </button>
        <h2 className="text-center text-[33.500px] font-semibold tracking-[-0.500px]">Map</h2>
      </header>
      <RegionMap />
    </section>
  );
}

/* ------------------------------------------------------------------ */
/* Page                                                                 */
/* ------------------------------------------------------------------ */

function StatusBar() {
  return (
    <div className="absolute inset-x-0 top-0 grid h-[42px] grid-cols-3 items-center text-[24px] leading-[42px] text-white">
      <div className="flex items-center pl-3">
        <span className="tracking-[-0.300px]">Carrier</span>
        <svg viewBox="0 0 26 19" className="ml-[11px] h-[19px] w-[26px]" fill="none" stroke="#fff" strokeWidth="3.200">
          <path d="M1.500 7.500 Q13 -3.500 24.500 7.500" />
          <path d="M6 12 Q13 5 20 12" />
          <path d="M13 19 L8.800 14.600 Q13 11 17.200 14.600 Z" fill="#fff" stroke="none" />
        </svg>
      </div>
      <div className="pl-2 text-center font-medium tracking-[0.100px]">9:24 AM</div>
      <div className="flex items-center justify-end pr-[10px]">
        <span className="tracking-[-0.600px]">100%</span>
        <svg viewBox="0 0 50 20" className="ml-[6px] h-5 w-[50px]">
          <rect x="0.700" y="0.700" width="44" height="18.200" rx="3" fill="none" stroke="#fff" strokeWidth="1.300" />
          <rect x="2.500" y="2.500" width="40.500" height="14.600" rx="1.500" fill="#fff" />
          <path d="M46 6.200 Q49 7 49 9.800 Q49 12.600 46 13.400 Z" fill="#fff" />
        </svg>
      </div>
    </div>
  );
}

export default function App() {
  return (
    <div className="relative flex h-[2048px] w-[2732px] overflow-hidden bg-[#838487] font-['Inter',sans-serif]">
      <aside className="flex w-[1038px] shrink-0 flex-col">
        <header className="flex h-[129px] items-end justify-between border-b border-[#65494d] bg-[#6e262a] pr-[50px] pb-[22px] pl-10">
          <MdSettings className="h-11 w-11 text-[#85797c]" />
          <h1 className="mr-[5px] text-[33px] leading-[43px] font-semibold tracking-[-0.400px] text-[#908a8d]">Météo</h1>
          <svg viewBox="0 0 28 28" className="mb-2 h-7 w-7" fill="none" stroke="#8b8285" strokeWidth="3">
            <path d="M1.500 1.500 L26.500 26.500 M26.500 1.500 L1.500 26.500" />
          </svg>
        </header>
        <div className="flex h-[143px] justify-center pt-[27px]">
          <button className="flex h-[88px] w-[88px] items-center justify-center rounded-full bg-[#6e262a] shadow-[0_-2px_10px_rgba(0,0,0,0.250)]">
            <svg viewBox="0 0 36 36" className="mt-[2px] h-9 w-9" stroke="#8e898b" strokeWidth="3.800">
              <path d="M18 0V36M1 18H35" />
            </svg>
          </button>
        </div>
        <ul>
          {PLACES.map((p) => (
            <PlaceRow key={p.name} place={p} />
          ))}
        </ul>
      </aside>
      <div className="w-px shrink-0 bg-[#5c5d60]" />
      <main className="flex flex-1 flex-col">
        <header className="flex h-[129px] items-end justify-end gap-[6px] border-b border-[#65494d] bg-[#6e262a] pr-10 pb-10">
          <span className="h-3 w-3 rounded-full bg-[#80767a]" />
          <span className="h-3 w-3 rounded-full bg-[#80767a]" />
          <span className="h-3 w-3 rounded-full bg-[#80767a]" />
        </header>
        <svg viewBox="0 0 780 900" className="mt-[801px] ml-[841px] h-[300px] w-[260px]" fill="#6e262a">
          <path d="M78 209 L140 238 Q160 247 174 230 L248 87 L323 228 Q335 248 362 238 L420 208 L379 435 Q378 462 392 462 Q403 461 412 451 L511 344 L528 400 Q532 411 548 410 L671 384 L633 528 Q632 538 640 543 L689 566 L474 740 Q466 749 469 765 L485 812 H240 A276 276 0 0 0 176 355 Q150 267 78 209 Z" />
          <path d="M60 290 L78 315 Q108 355 114 407 A207 207 0 0 1 78 812 L60 812 Z" />
        </svg>
      </main>
      <div className="absolute inset-0 flex items-center justify-center">
        <MapSheet />
      </div>
      <StatusBar />
    </div>
  );
}
